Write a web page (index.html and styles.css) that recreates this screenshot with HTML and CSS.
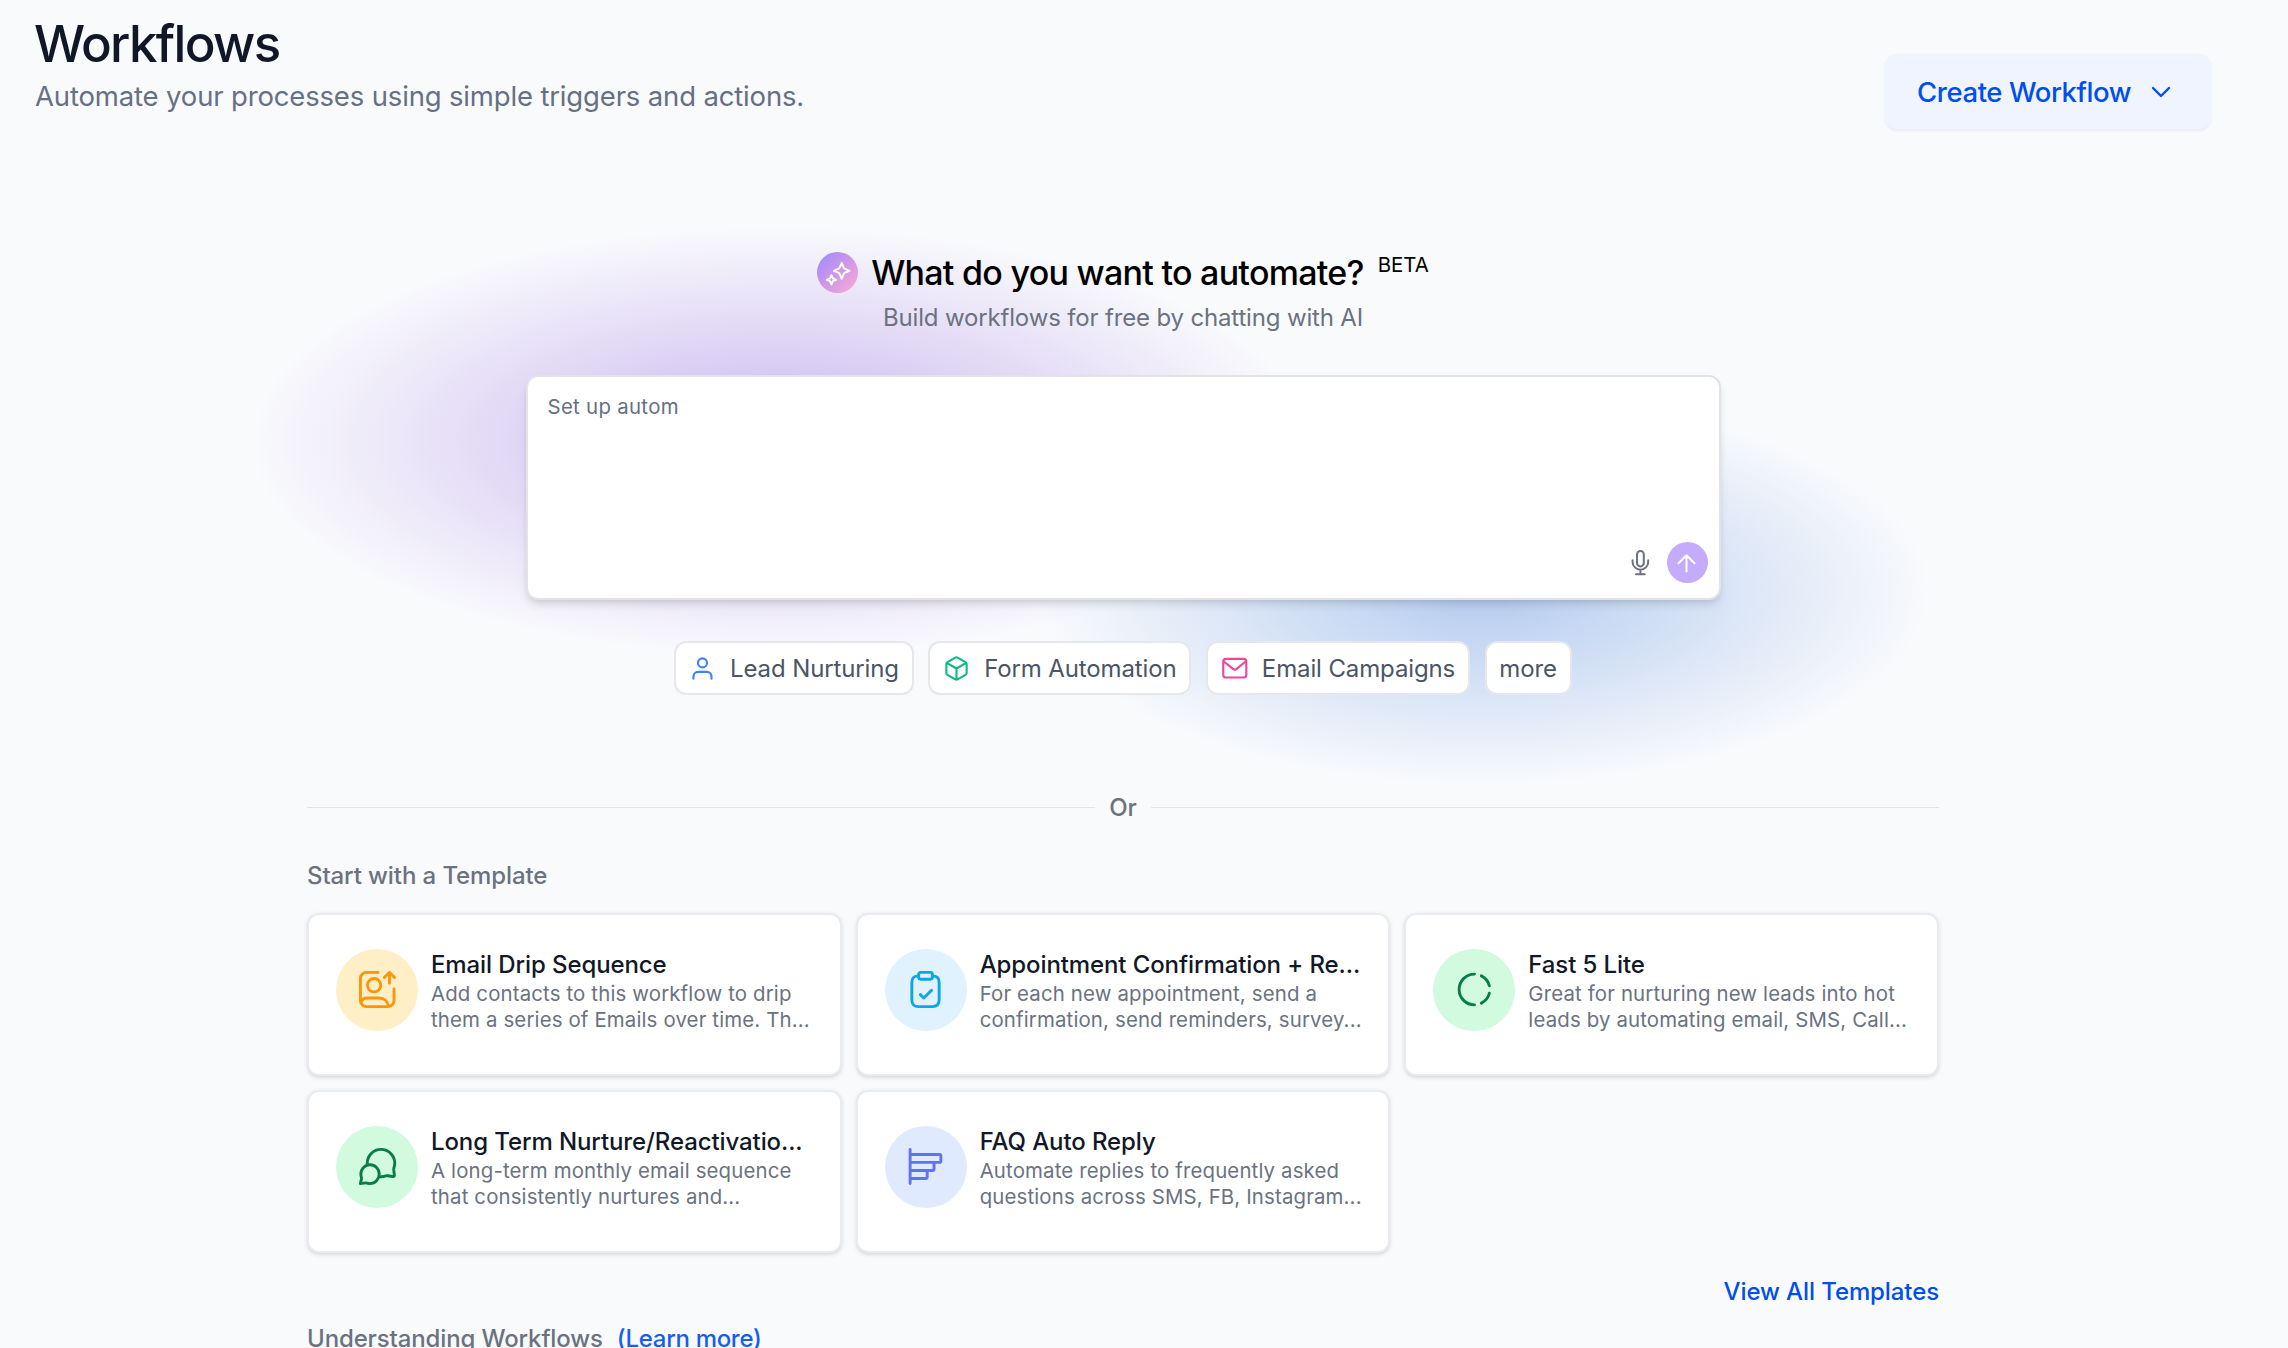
FILE: index.html
```html
<!DOCTYPE html>
<html lang="en">
<head>
<meta charset="utf-8">
<title>Workflows</title>
<link rel="stylesheet" href="styles.css">
</head>
<body>
<header class="page-header">
  <div>
    <h1 class="page-title">Workflows</h1>
    <p class="page-subtitle">Automate your processes using simple triggers and actions.</p>
  </div>
  <button class="create-btn" type="button">
    <span>Create Workflow</span>
    <svg class="chevron" viewBox="0 0 20 12"><path d="M2 2l8 8 8-8"/></svg>
  </button>
</header>

<main class="content">
  <section class="hero">
    <div class="glow glow-purple"></div>
    <div class="glow glow-blue"></div>
    <div class="hero-heading">
      <span class="spark">
        <svg viewBox="0 0 41 41"><path d="M24.7 11l1.9 4.4a3 3 0 0 0 1.5 1.5l4.4 1.9-4.4 1.9a3 3 0 0 0-1.5 1.5l-1.9 4.4-1.9-4.4a3 3 0 0 0-1.5-1.5l-4.4-1.9 4.4-1.9a3 3 0 0 0 1.5-1.5z"/><path d="M14.4 23.2l1.4 3.2 3.2 1.4-3.2 1.4-1.4 3.2-1.4-3.2-3.2-1.4 3.2-1.4z"/></svg>
      </span>
      <h2 class="hero-title">What do you want to automate?</h2>
      <span class="beta">BETA</span>
    </div>
    <p class="hero-subtitle">Build workflows for free by chatting with AI</p>

    <div class="prompt">
      <div class="prompt-text">Set up autom</div>
      <div class="prompt-actions">
        <svg class="mic" viewBox="0 0 19 26"><rect x="6" y="1" width="6.8" height="15.4" rx="3.4"/><path d="M1.6 10.2v1.7a7.8 7.8 0 0 0 15.6 0v-1.7M9.4 19.7v4.6M5 24.3h8.8"/></svg>
        <span class="send"><svg viewBox="0 0 41 41"><path d="M19.5 29.5v-16M11.5 21.2l8-8 8 8"/></svg></span>
      </div>
    </div>

    <div class="chips">
      <span class="chip"><svg class="chip-icon blue" viewBox="0 0 24 24"><circle cx="12" cy="7" r="4"/><path d="M20 21v-2a4 4 0 0 0-4-4H8a4 4 0 0 0-4 4v2"/></svg>Lead Nurturing</span>
      <span class="chip"><svg class="chip-icon green" viewBox="0 0 24 24"><path d="M21 16V8a2 2 0 0 0-1-1.73l-7-4a2 2 0 0 0-2 0l-7 4A2 2 0 0 0 3 8v8a2 2 0 0 0 1 1.73l7 4a2 2 0 0 0 2 0l7-4A2 2 0 0 0 21 16zM3.3 7l8.7 5 8.7-5M12 22V12"/></svg>Form Automation</span>
      <span class="chip"><svg class="chip-icon pink" viewBox="0 0 24 24"><rect x="2" y="3.5" width="20.5" height="16.5" rx="2.5"/><path d="M2.5 5.800l8.500 6.700a2.100 2.100 0 0 0 2.600 0L22 5.800"/></svg>Email Campaigns</span>
      <span class="chip">more</span>
    </div>
  </section>

  <div class="divider">Or</div>

  <h3 class="section-title">Start with a Template</h3>
  <div class="cards">
    <article class="card">
      <span class="badge amber"><svg viewBox="0 0 24 24"><path d="M12.300 2H5.500A3.500 3.500 0 0 0 2 5.500v13A3.500 3.500 0 0 0 5.500 22H18.200a3.500 3.500 0 0 0 3.500-3.500V11.700M19 8.300V2M16 5l3-3 3 3M2.300 20c.3-2 1.600-3 3.700-3h6.700c3.200 0 5.500 2 5.700 5"/><circle cx="10" cy="9.500" r="3.900"/></svg></span>
      <div><h4>Email Drip Sequence</h4><p>Add contacts to this workflow to drip<br>them a series of Emails over time. Th...</p></div>
    </article>
    <article class="card">
      <span class="badge sky"><svg viewBox="0 0 24 24"><path d="M16 4c2.8 0 4 1.200 4 4v10c0 2.800-1.200 4-4 4H8c-2.800 0-4-1.200-4-4V8c0-2.800 1.200-4 4-4M9 15l2 2 4.500-4.500"/><rect x="8" y="2" width="8" height="4" rx="1.100"/></svg></span>
      <div><h4>Appointment Confirmation + Re...</h4><p>For each new appointment, send a<br>confirmation, send reminders, survey...</p></div>
    </article>
    <article class="card">
      <span class="badge mint"><svg viewBox="0 0 24 24"><path d="M12 3a9 9 0 0 0 0 18M16 4a9 9 0 0 1 4.700 5.800M20.700 14.200A9 9 0 0 1 16 20"/></svg></span>
      <div><h4>Fast 5 Lite</h4><p>Great for nurturing new leads into hot<br>leads by automating email, SMS, Call...</p></div>
    </article>
    <article class="card">
      <span class="badge mint"><svg viewBox="0 0 24 24"><path d="M6.094 11.229A8 8 0 0 1 6 10C6 5.582 9.605 2 14.053 2s8.052 3.582 8.052 8c0 .998-.184 1.954-.52 2.835-.13.330-.150.450-.116.853l.403 3.270c.080.700-.180 1-.910.890l-3.186-.467c-.340-.050-.500-.020-.883.107A8 8 0 0 1 14.053 18a8 8 0 0 1-1.230-.093M7.632 22C10.597 22 13 19.538 13 16.500S10.597 11 7.632 11s-5.369 2.462-5.369 5.500c0 .611.097 1.198.277 1.747.150.450.160.600.071.991L2 22l2.995-.409c.330-.045.500-.030.887.110.549.194 1.137.299 1.750.299z"/></svg></span>
      <div><h4>Long Term Nurture/Reactivatio...</h4><p>A long-term monthly email sequence<br>that consistently nurtures and...</p></div>
    </article>
    <article class="card">
      <span class="badge indigo"><svg viewBox="0 0 24 24"><path d="M3 2v20M3 5h17.200a.8.8 0 0 1 .8.8v3a.8.8 0 0 1-.8.8H3M17 9.600v3.900a.8.8 0 0 1-.8.8H3M13 14.300V18.200a.8.8 0 0 1-.8.8H3"/></svg></span>
      <div><h4>FAQ Auto Reply</h4><p>Automate replies to frequently asked<br>questions across SMS, FB, Instagram...</p></div>
    </article>
  </div>
  <a class="view-all">View All Templates</a>
  <div class="learn"><span>Understanding Workflows</span><a>(Learn more)</a></div>
</main>
</body>
</html>
```
FILE: styles.css
```css
* { box-sizing: border-box; }
html, body { height: 1348px; overflow: hidden; }
body {
  margin: 0;
  background: #f9fafc;
  color: #111827;
  font-family: Inter, "Liberation Sans", sans-serif;
}
h1, h2, h3, h4, p { margin: 0; font-weight: 500; }
svg { display: block; fill: none; stroke: currentColor; stroke-linecap: round; stroke-linejoin: round; }

.page-header {
  display: flex;
  justify-content: space-between;
  align-items: flex-start;
  height: 129px;
  padding: 8px 77px 0 35px;
}
.page-title { margin-left: -1px; font-size: 51px; line-height: 71px; letter-spacing: -1.65px; color: #101828; }
.page-subtitle { font-size: 27.5px; line-height: 34px; letter-spacing: -.16px; font-weight: 400; color: #667085; }
.create-btn {
  display: flex;
  align-items: center;
  gap: 20px;
  width: 326px;
  height: 75px;
  margin-top: 46px;
  padding: 0 0 0 32px;
  border: 0;
  border-radius: 12px;
  background: #eff4ff;
  box-shadow: 0 1.5px 3px rgba(16, 24, 40, .06);
  color: #004eeb;
  font: 500 27.5px/34px Inter, sans-serif;
  letter-spacing: -.42px;
}
.chevron { width: 20px; height: 12px; stroke-width: 2.4; }

.content { width: 1632px; margin-left: 307px; }
.hero {
  position: relative;
  z-index: 0;
  display: flex;
  flex-direction: column;
  align-items: center;
  padding-top: 123px;
}
.glow { position: absolute; z-index: -1; border-radius: 50%; }
.glow-purple {
  left: -56px; top: 98px; width: 1054px; height: 428px;
  background: radial-gradient(closest-side, #c8b4ef, rgba(204, 184, 239, 0));
}
.glow-blue {
  left: 729px; top: 268px; width: 896px; height: 388px;
  background: radial-gradient(closest-side, #b3cbef, rgba(182, 206, 239, 0));
}
.hero-heading { display: flex; align-items: center; height: 41px; }
.spark { width: 41px; height: 41px; border-radius: 50%; background: linear-gradient(135deg, #a78bfa 10%, #f9a8d4 95%); color: #fff; stroke-width: 2; }
.hero-title { margin: -1px 0 0 13px; font-size: 34px; line-height: 41px; letter-spacing: -.73px; color: #000; white-space: nowrap; }
.beta { margin: 0 0 16px 14px; font-size: 20.4px; line-height: 26px; color: #000; }
.hero-subtitle { margin-top: 7px; font-size: 24px; line-height: 35px; letter-spacing: -.16px; font-weight: 400; color: #6b7280; }

.prompt {
  display: flex;
  flex-direction: column;
  justify-content: space-between;
  width: 1195px;
  height: 225px;
  margin-top: 40px;
  padding: 17px 11px 15px 20px;
  border: 2px solid #e2e2e8;
  border-radius: 12px;
  background: #fff;
  box-shadow: 0 6px 9px -1.5px rgba(0, 0, 0, .1), 0 3px 6px -3px rgba(0, 0, 0, .1);
}
.prompt-text { font-size: 20.4px; line-height: 26px; letter-spacing: .3px; color: #667085; }
.prompt-actions { display: flex; justify-content: flex-end; align-items: center; gap: 17px; }
.mic { width: 19px; height: 26px; color: #6b7280; stroke-width: 2; }
.send { width: 41px; height: 41px; border-radius: 50%; background: #c4abfb; color: #fff; stroke-width: 2; }

.chips { display: flex; gap: 14.6px; margin-top: 41px; }
.chip {
  display: flex;
  align-items: center;
  gap: 14px;
  height: 54px;
  padding: 0 12.8px;
  border: 2px solid #e5e7eb;
  border-radius: 12px;
  background: #fff;
  font-size: 24px;
  letter-spacing: -.12px;
  color: #4b5563;
  white-space: nowrap;
}
.chip-icon { width: 27px; height: 27px; stroke-width: 1.9; }
.blue { color: #3b82f6; }
.green { color: #10b981; }
.pink { color: #ec4899; }

.divider { display: flex; align-items: center; gap: 14px; margin-top: 95px; font-size: 24px; line-height: 35px; font-weight: 500; color: #6b7280; }
.divider::before, .divider::after { content: ""; flex: 1; height: 1px; background: #e2e4e9; }

.section-title { margin-top: 33px; font-size: 24px; line-height: 35px; letter-spacing: -.1px; color: #6b7280; }
.cards { display: grid; grid-template-columns: repeat(3, 1fr); grid-auto-rows: 163px; gap: 14px; margin-top: 20px; }
.card {
  display: flex;
  align-items: flex-start;
  gap: 13px;
  padding: 33.5px 20px 0 27px;
  border: 2px solid #eaebef;
  border-radius: 12px;
  background: #fff;
  box-shadow: 0 1.5px 4.5px rgba(0, 0, 0, .1), 0 1.5px 3px -1.5px rgba(0, 0, 0, .1);
  white-space: nowrap;
}
.card h4 { font-size: 24px; line-height: 32px; letter-spacing: -.1px; color: #111827; }
.card p { font-size: 20.4px; line-height: 26px; letter-spacing: .15px; font-weight: 400; color: #6b7280; }
.badge { display: grid; place-items: center; flex: none; width: 82px; height: 82px; border-radius: 50%; stroke-width: 1.7; }
.badge svg { width: 41px; height: 41px; }
.amber { background: #feefc7; color: #fb9607; }
.sky { background: #e0f2fe; color: #0ea5e9; }
.mint { background: #d1fadf; color: #087d4b; }
.indigo { background: #e0eaff; color: #6172f3; }

.view-all { display: block; margin-top: 22px; font-size: 24px; line-height: 34px; font-weight: 500; letter-spacing: -.1px; text-align: right; color: #004eeb; }
.learn { display: flex; gap: 14px; margin-top: 13px; font-size: 24px; line-height: 34px; font-weight: 500; letter-spacing: -.13px; color: #6b7280; }
.learn a { letter-spacing: -.3px; color: #155eef; }
```
